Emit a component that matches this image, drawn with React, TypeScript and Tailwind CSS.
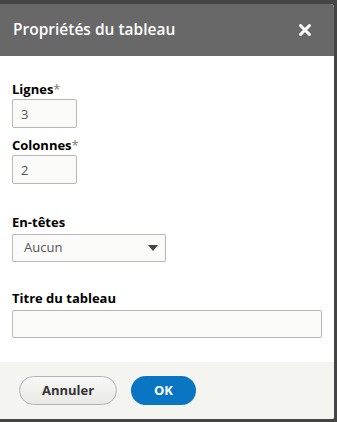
import { X } from 'lucide-react';

function Field({ label, required, children, className = '' }: { label: string; required?: boolean; children: React.ReactNode; className?: string }) {
  return (
    <div className={className}>
      <label className="block text-[13px] font-bold leading-[16px] text-black">
        {label}
        {required && <span className="font-normal text-[#8a7a5a]">*</span>}
      </label>
      {children}
    </div>
  );
}

export default function App() {
  return (
    <div className="h-[422px] w-[337px] bg-[#454545] pt-[4px] pr-[3px] pb-[3px]" style={{ fontFamily: '"Open Sans", "Noto Sans", sans-serif' }}>
      <div className="flex h-full flex-col overflow-hidden rounded-tr-[4px] rounded-br-[2px] bg-white">
        <div className="flex h-[52px] items-center justify-between bg-[#686868] pl-[13px] pr-[20px]">
          <h1 className="text-[15.5px] font-semibold text-white">Propriétés du tableau</h1>
          <X size={18} strokeWidth={4} className="text-white" />
        </div>
        <div className="flex-1 px-[12px] pt-[25px]">
          <Field label="Lignes" required>
            <input
              readOnly
              value="3"
              className="mt-[2px] h-[29px] w-[65px] rounded-[2px] border border-[#b8b8b8] bg-[#fafaf9] px-[8px] text-[13px] text-[#555]"
            />
          </Field>
          <Field label="Colonnes" required className="mt-[9px]">
            <input
              readOnly
              value="2"
              className="mt-[2px] h-[29px] w-[65px] rounded-[2px] border border-[#b8b8b8] bg-[#fafaf9] px-[8px] text-[13px] text-[#555]"
            />
          </Field>
          <Field label="En-têtes" className="mt-[30px]">
            <div className="mt-[4px] flex h-[28px] w-[154px] items-center justify-between rounded-[2px] border border-[#b8b8b8] bg-[#fafaf9] pl-[11px] pr-[7px] text-[13px] text-[#555]">
              <span>Aucun</span>
              <svg width="10" height="6" viewBox="0 0 10 6"><path d="M0 0h10L5 6z" fill="#444" /></svg>
            </div>
          </Field>
          <Field label="Titre du tableau" className="mt-[28px]">
            <div className="mt-[4px] h-[28px] w-[310px] rounded-[2px] border border-[#b8b8b8] bg-[#fafaf9]" />
          </Field>
        </div>
        <div className="flex h-[57px] items-center gap-[14px] bg-[#f4f4f1] pl-[19px]">
          <button className="h-[29px] w-[98px] rounded-full border border-[#b3b3b3] bg-gradient-to-b from-[#f8f8f6] to-[#e8e8e4] text-[13px] font-bold text-[#333]">
            Annuler
          </button>
          <button className="h-[29px] w-[65px] rounded-full bg-[#0a75c2] text-[13px] font-bold text-white">
            OK
          </button>
        </div>
      </div>
    </div>
  );
}
